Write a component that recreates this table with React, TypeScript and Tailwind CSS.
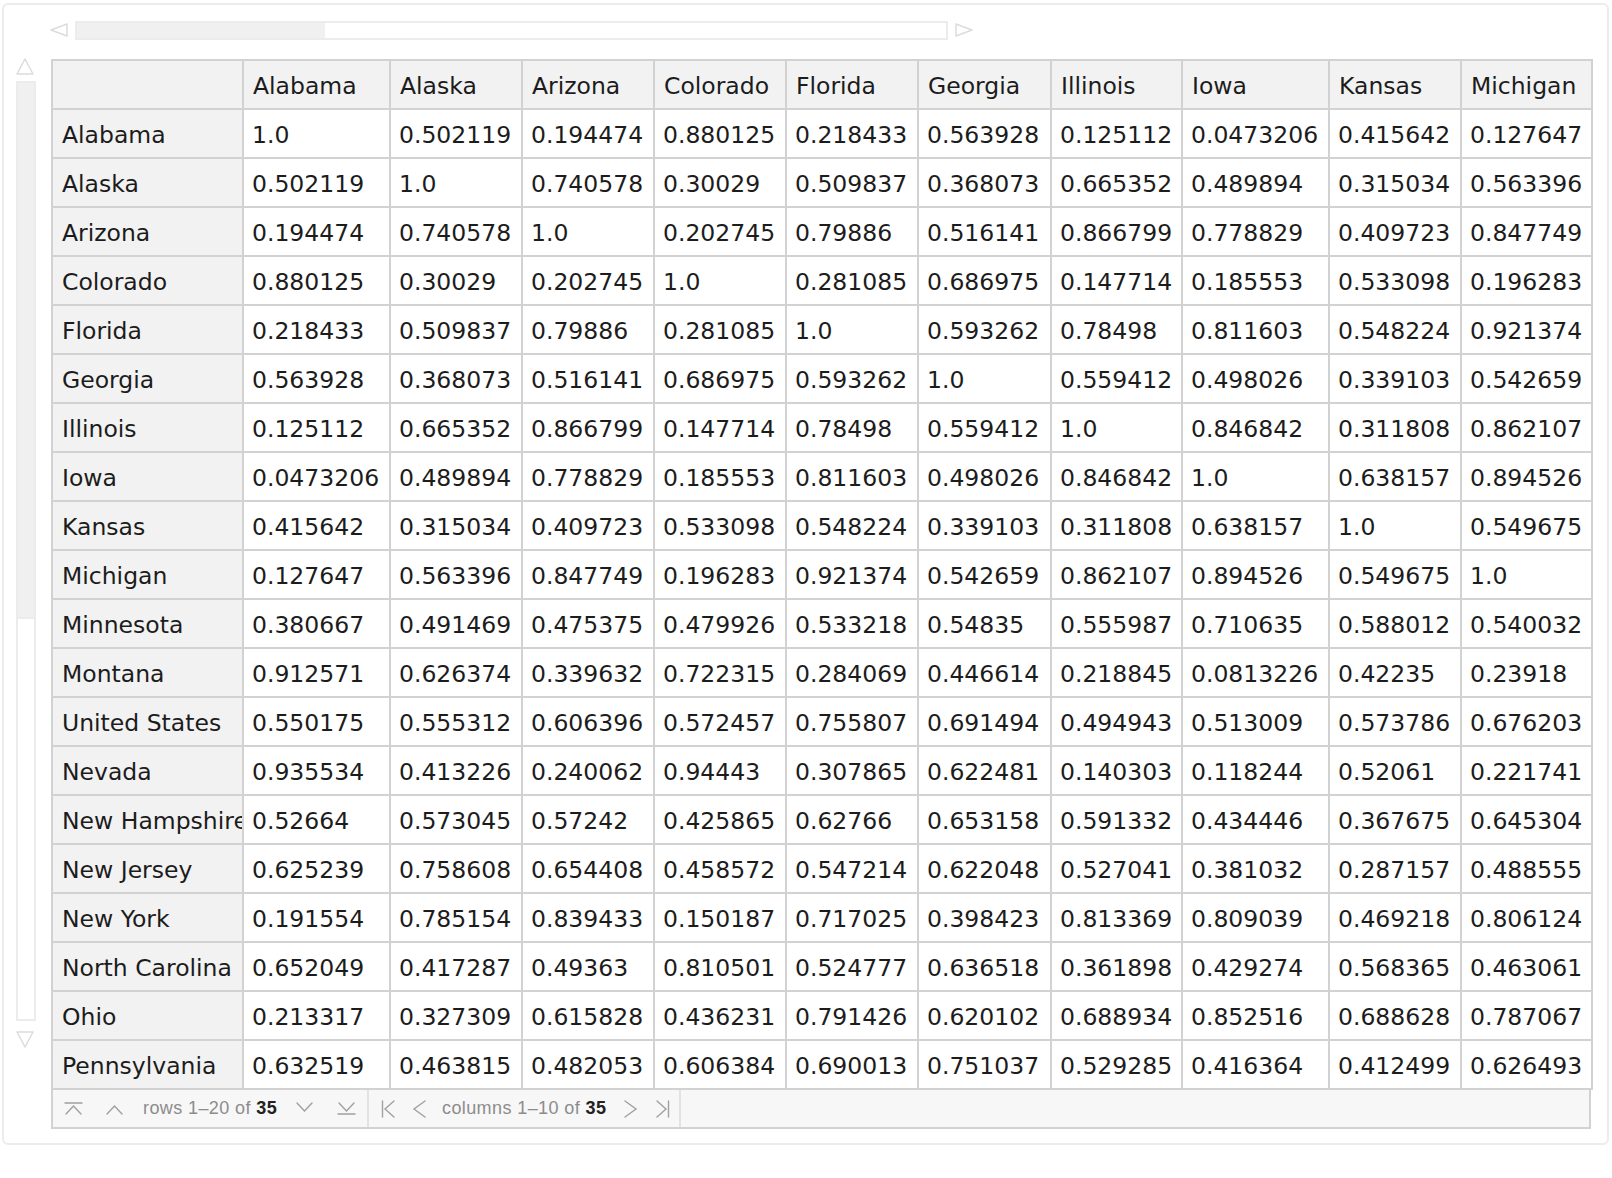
import React from 'react';

const COLS = ['Alabama', 'Alaska', 'Arizona', 'Colorado', 'Florida', 'Georgia', 'Illinois', 'Iowa', 'Kansas', 'Michigan'];
const WIDTHS = [191, 147, 132, 132, 132, 132, 133, 131, 147, 132, 131];

const ROWS: [string, string[]][] = [
  ['Alabama', ['1.0', '0.502119', '0.194474', '0.880125', '0.218433', '0.563928', '0.125112', '0.0473206', '0.415642', '0.127647']],
  ['Alaska', ['0.502119', '1.0', '0.740578', '0.30029', '0.509837', '0.368073', '0.665352', '0.489894', '0.315034', '0.563396']],
  ['Arizona', ['0.194474', '0.740578', '1.0', '0.202745', '0.79886', '0.516141', '0.866799', '0.778829', '0.409723', '0.847749']],
  ['Colorado', ['0.880125', '0.30029', '0.202745', '1.0', '0.281085', '0.686975', '0.147714', '0.185553', '0.533098', '0.196283']],
  ['Florida', ['0.218433', '0.509837', '0.79886', '0.281085', '1.0', '0.593262', '0.78498', '0.811603', '0.548224', '0.921374']],
  ['Georgia', ['0.563928', '0.368073', '0.516141', '0.686975', '0.593262', '1.0', '0.559412', '0.498026', '0.339103', '0.542659']],
  ['Illinois', ['0.125112', '0.665352', '0.866799', '0.147714', '0.78498', '0.559412', '1.0', '0.846842', '0.311808', '0.862107']],
  ['Iowa', ['0.0473206', '0.489894', '0.778829', '0.185553', '0.811603', '0.498026', '0.846842', '1.0', '0.638157', '0.894526']],
  ['Kansas', ['0.415642', '0.315034', '0.409723', '0.533098', '0.548224', '0.339103', '0.311808', '0.638157', '1.0', '0.549675']],
  ['Michigan', ['0.127647', '0.563396', '0.847749', '0.196283', '0.921374', '0.542659', '0.862107', '0.894526', '0.549675', '1.0']],
  ['Minnesota', ['0.380667', '0.491469', '0.475375', '0.479926', '0.533218', '0.54835', '0.555987', '0.710635', '0.588012', '0.540032']],
  ['Montana', ['0.912571', '0.626374', '0.339632', '0.722315', '0.284069', '0.446614', '0.218845', '0.0813226', '0.42235', '0.23918']],
  ['United States', ['0.550175', '0.555312', '0.606396', '0.572457', '0.755807', '0.691494', '0.494943', '0.513009', '0.573786', '0.676203']],
  ['Nevada', ['0.935534', '0.413226', '0.240062', '0.94443', '0.307865', '0.622481', '0.140303', '0.118244', '0.52061', '0.221741']],
  ['New Hampshire', ['0.52664', '0.573045', '0.57242', '0.425865', '0.62766', '0.653158', '0.591332', '0.434446', '0.367675', '0.645304']],
  ['New Jersey', ['0.625239', '0.758608', '0.654408', '0.458572', '0.547214', '0.622048', '0.527041', '0.381032', '0.287157', '0.488555']],
  ['New York', ['0.191554', '0.785154', '0.839433', '0.150187', '0.717025', '0.398423', '0.813369', '0.809039', '0.469218', '0.806124']],
  ['North Carolina', ['0.652049', '0.417287', '0.49363', '0.810501', '0.524777', '0.636518', '0.361898', '0.429274', '0.568365', '0.463061']],
  ['Ohio', ['0.213317', '0.327309', '0.615828', '0.436231', '0.791426', '0.620102', '0.688934', '0.852516', '0.688628', '0.787067']],
  ['Pennsylvania', ['0.632519', '0.463815', '0.482053', '0.606384', '0.690013', '0.751037', '0.529285', '0.416364', '0.412499', '0.626493']],
];

// small outline triangles used on the scrollbars
function Tri({ dir }: { dir: 'left' | 'right' | 'up' | 'down' }) {
  const pts = {
    left: '17,1 1,7 17,13',
    right: '1,1 17,7 1,13',
    up: '1,16 9,1 17,16',
    down: '1,1 9,16 17,1',
  }[dir];
  const horiz = dir === 'left' || dir === 'right';
  return (
    <svg width={18} height={horiz ? 14 : 17} viewBox={horiz ? '0 0 18 14' : '0 0 18 17'} className="block shrink-0">
      <polygon points={pts} fill="none" stroke="#dcdcdc" strokeWidth={1.5} strokeLinejoin="round" />
    </svg>
  );
}

function NavIcon({ kind }: { kind: 'top' | 'up' | 'down' | 'bottom' | 'first' | 'prev' | 'next' | 'last' }) {
  const s = { fill: 'none', stroke: '#a0a0a0', strokeWidth: 1.4, strokeLinecap: 'round' as const };
  if (kind === 'top' || kind === 'up' || kind === 'down' || kind === 'bottom') {
    return (
      <svg width={19} height={13} viewBox="0 0 19 13" className="block shrink-0">
        {kind === 'top' && <line x1={1} y1={1} x2={18} y2={1} {...s} />}
        {(kind === 'top' || kind === 'up') && <polyline points="2,12 9.5,4 17,12" {...s} />}
        {(kind === 'down' || kind === 'bottom') && <polyline points="2,1 9.5,9 17,1" {...s} />}
        {kind === 'bottom' && <line x1={1} y1={12} x2={18} y2={12} {...s} />}
      </svg>
    );
  }
  return (
    <svg width={15} height={18} viewBox="0 0 15 18" className="block shrink-0">
      {kind === 'first' && <line x1={1.5} y1={1} x2={1.5} y2={17} {...s} />}
      {(kind === 'first' || kind === 'prev') && <polyline points={kind === 'first' ? '13,1 4,9 13,17' : '13,1 2,9 13,17'} {...s} />}
      {(kind === 'next' || kind === 'last') && <polyline points={kind === 'last' ? '2,1 11,9 2,17' : '2,1 13,9 2,17'} {...s} />}
      {kind === 'last' && <line x1={13.5} y1={1} x2={13.5} y2={17} {...s} />}
    </svg>
  );
}

export default function App() {
  return (
    <div className="w-[1612px] h-[1178px] bg-white font-['DejaVu_Sans',Verdana,sans-serif]">
      <div className="ml-[2px] mt-[3px] w-[1607px] h-[1142px] border-2 border-[#ececec] rounded-[6px] bg-white pt-[16px]">
        {/* Horizontal scrollbar */}
        <div className="flex items-center h-[18px] pl-[46px] gap-[7px]">
          <Tri dir="left" />
          <div className="w-[873px] h-[19px] border-2 border-[#ececec] bg-white">
            <div className="w-[248px] h-full bg-[#f0f0f0]" />
          </div>
          <Tri dir="right" />
        </div>

        <div className="flex mt-[20px]">
          {/* Vertical scrollbar */}
          <div className="w-[47px] pl-[12px] flex flex-col">
            <div className="-mt-[1px]">
              <Tri dir="up" />
            </div>
            <div className="mt-[6px] w-[20px] h-[940px] border-2 border-[#ececec] bg-white">
              <div className="w-full h-[536px] bg-[#f0f0f0] border-b-2 border-[#ececec]" />
            </div>
            <div className="mt-[10px]">
              <Tri dir="down" />
            </div>
          </div>

          {/* Table */}
          <div className="w-[1540px]">
            <table className="table-fixed border-collapse w-[1540px] text-[23.5px] text-[#1c1c1c] leading-none">
              <colgroup>
                {WIDTHS.map((w, i) => (
                  <col key={i} style={{ width: w }} />
                ))}
              </colgroup>
              <thead>
                <tr className="h-[49px]">
                  <th className="border-2 border-[#d2d2d2] bg-[#f2f2f2]" />
                  {COLS.map((c) => (
                    <th key={c} className="border-2 border-[#d2d2d2] bg-[#f2f2f2] font-normal text-left pl-[9px] pt-[4px] whitespace-nowrap overflow-hidden">
                      {c}
                    </th>
                  ))}
                </tr>
              </thead>
              <tbody>
                {ROWS.map(([name, vals]) => (
                  <tr key={name} className="h-[49px]">
                    <td className="border-2 border-[#d2d2d2] bg-[#f2f2f2] pl-[9px] pt-[4px] whitespace-nowrap overflow-hidden">{name}</td>
                    {vals.map((v, i) => (
                      <td key={i} className="border-2 border-[#d2d2d2] bg-white pl-[8px] pt-[4px] whitespace-nowrap overflow-hidden">
                        {v}
                      </td>
                    ))}
                  </tr>
                ))}
              </tbody>
            </table>

            {/* Footer pager */}
            <div className="flex h-[39px] border-2 border-t-0 border-[#d2d2d2] bg-[#f7f7f7] font-['Liberation_Sans',Arial,sans-serif] text-[18px] tracking-[0.4px] text-[#8c8c8c]">
              <div className="w-[316px] flex items-center pl-[11px] border-r-2 border-[#e2e2e2]">
                <NavIcon kind="top" />
                <div className="ml-[22px]"><NavIcon kind="up" /></div>
                <span className="ml-[19px] whitespace-nowrap">
                  rows 1–20 of <b className="text-[#222] font-bold">35</b>
                </span>
                <div className="ml-[18px]"><NavIcon kind="down" /></div>
                <div className="ml-[23px]"><NavIcon kind="bottom" /></div>
              </div>
              <div className="w-[312px] flex items-center pl-[12px] border-r-2 border-[#e2e2e2]">
                <NavIcon kind="first" />
                <div className="ml-[16px]"><NavIcon kind="prev" /></div>
                <span className="ml-[15px] whitespace-nowrap">
                  columns 1–10 of <b className="text-[#222] font-bold">35</b>
                </span>
                <div className="ml-[17px]"><NavIcon kind="next" /></div>
                <div className="ml-[17px]"><NavIcon kind="last" /></div>
              </div>
            </div>
          </div>
        </div>
      </div>
    </div>
  );
}
